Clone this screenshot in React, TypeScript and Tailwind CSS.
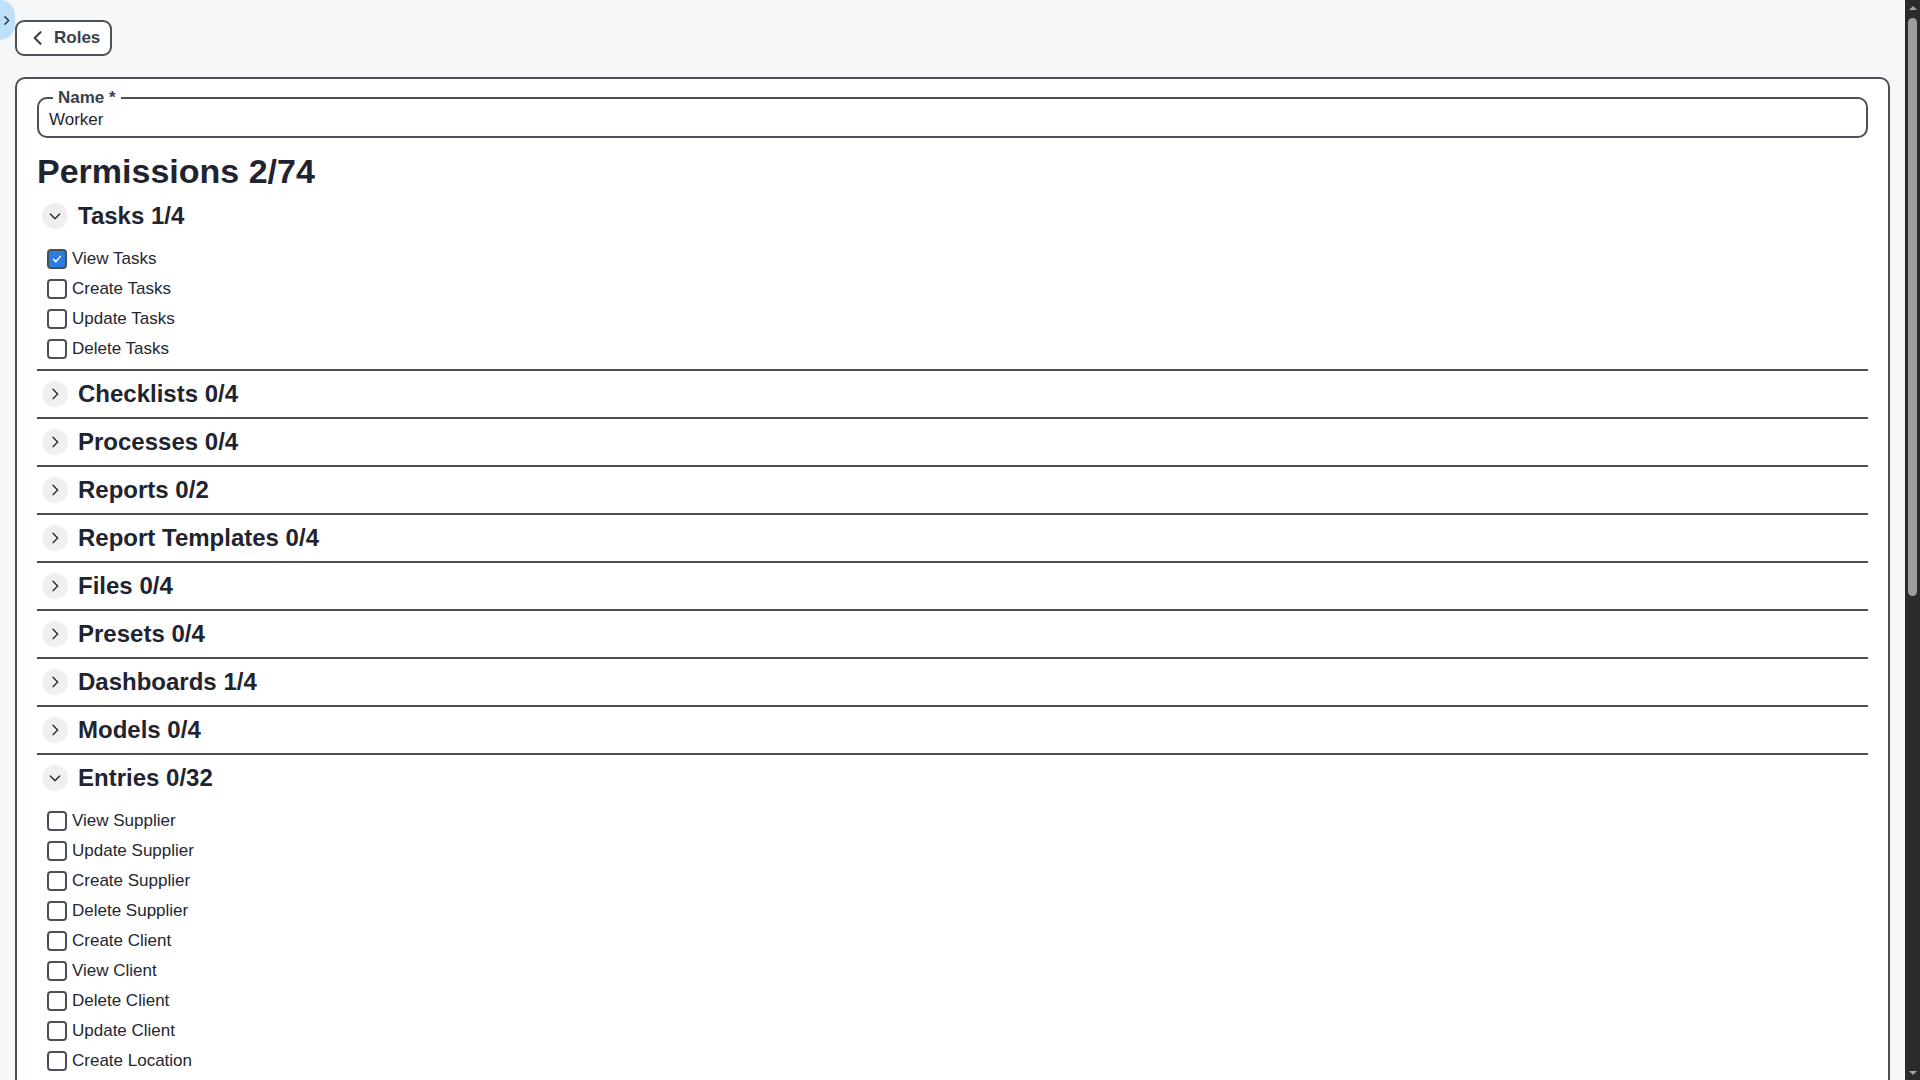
import { useState } from 'react'

type Section = { title: string; granted: number; total: number; open?: boolean; items?: string[]; checked?: string[] }

const sections: Section[] = [
  { title: 'Tasks', granted: 1, total: 4, open: true, items: ['View Tasks', 'Create Tasks', 'Update Tasks', 'Delete Tasks'], checked: ['View Tasks'] },
  { title: 'Checklists', granted: 0, total: 4 },
  { title: 'Processes', granted: 0, total: 4 },
  { title: 'Reports', granted: 0, total: 2 },
  { title: 'Report Templates', granted: 0, total: 4 },
  { title: 'Files', granted: 0, total: 4 },
  { title: 'Presets', granted: 0, total: 4 },
  { title: 'Dashboards', granted: 1, total: 4 },
  { title: 'Models', granted: 0, total: 4 },
  {
    title: 'Entries',
    granted: 0,
    total: 32,
    open: true,
    items: [
      'View Supplier',
      'Update Supplier',
      'Create Supplier',
      'Delete Supplier',
      'Create Client',
      'View Client',
      'Delete Client',
      'Update Client',
      'Create Location',
      'View Location',
      'Update Location',
      'Delete Location',
    ],
    checked: [],
  },
]

function Chevron({ dir, className, width = 2.2 }: { dir: 'left' | 'right' | 'down'; className?: string; width?: number }) {
  const d = dir === 'left' ? 'M15 5l-7 7 7 7' : dir === 'right' ? 'M9 5l7 7-7 7' : 'M5 9l7 7 7-7'
  return (
    <svg viewBox="0 0 24 24" fill="none" stroke="currentColor" strokeWidth={width} strokeLinecap="round" strokeLinejoin="round" className={className}>
      <path d={d} />
    </svg>
  )
}

function Checkbox({ label, initial }: { label: string; initial: boolean }) {
  const [on, setOn] = useState(initial)
  return (
    <label className="flex items-center h-[30px] pl-[10px] gap-[5px] cursor-pointer" onClick={() => setOn(!on)}>
      <span
        className={
          on
            ? 'w-5 h-5 rounded-[4px] border-2 border-[#4b5058] bg-[#2b7de0] flex items-center justify-center'
            : 'w-5 h-5 rounded-[4px] border-2 border-[#4b5058] bg-white'
        }
      >
        {on && (
          <svg viewBox="0 0 16 16" className="w-3 h-3" fill="none" stroke="white" strokeWidth={2} strokeLinecap="round" strokeLinejoin="round">
            <path d="M3.5 8.5l3 3 6-7" />
          </svg>
        )}
      </span>
      <span className="text-[17px] text-[#222731]">{label}</span>
    </label>
  )
}

function PermissionSection({ section }: { section: Section }) {
  const [open, setOpen] = useState(!!section.open)
  return (
    <div className="border-b-2 border-[#4b5058]">
      <button className="flex items-center h-[46px] w-full text-left" onClick={() => setOpen(!open)}>
        <span className="w-[26px] h-[26px] ml-[5px] rounded-full bg-[#efefef] flex items-center justify-center text-[#1f2633]">
          <Chevron dir={open ? 'down' : 'right'} className="w-4 h-4" width={2} />
        </span>
        <span className="ml-[10px] text-[24px] font-bold text-[#1f2430]">
          {section.title} {section.granted}/{section.total}
        </span>
      </button>
      {open && (
        <div className="pt-[5px] pb-[5px]">
          {section.items?.map((it) => (
            <Checkbox key={it} label={it} initial={!!section.checked?.includes(it)} />
          ))}
        </div>
      )}
    </div>
  )
}

function Scrollbar() {
  return (
    <div className="w-[15px] shrink-0 bg-[#2b2b2b] flex flex-col items-center">
      <div className="h-[15px] flex items-center justify-center">
        <div className="w-0 h-0 border-l-[4px] border-r-[4px] border-b-[4px] border-l-transparent border-r-transparent border-b-[#a3a3a3]" />
      </div>
      <div className="w-[9px] h-[578px] mt-[3px] rounded-full bg-[#9f9f9f]" />
      <div className="flex-1" />
      <div className="h-[15px] flex items-center justify-center">
        <div className="w-0 h-0 border-l-[4px] border-r-[4px] border-t-[4px] border-l-transparent border-r-transparent border-t-[#a3a3a3]" />
      </div>
    </div>
  )
}

export default function App() {
  return (
    <div className="h-screen flex bg-[#f6f7f9] font-['Liberation_Sans',Arial,sans-serif] text-[#1f2430]">
      <div className="flex-1 min-w-0 overflow-hidden">
        <div className="relative px-[15px] pt-5 pb-10">
          <div className="absolute left-0 top-0 w-[15px] h-10 rounded-r-full bg-[#bfe0fb] flex items-center text-[#1f2633]">
            <Chevron dir="right" className="w-[13px] h-[13px] shrink-0" width={2.4} />
          </div>
          <button className="flex items-center h-9 pl-[11px] pr-[10px] gap-[6px] border-2 border-[#4b5058] rounded-[9px] bg-white text-[17px] font-bold text-[#3a414d]">
            <Chevron dir="left" className="w-5 h-5" width={2.5} />
            Roles
          </button>

          <div className="mt-[21px] bg-white border-2 border-[#4b5058] rounded-[10px] p-5">
            <fieldset className="border-2 border-[#4b5058] rounded-[10px] px-[10px] pb-[4px] -mt-[11px]">
              <legend className="px-[5px] ml-[4px] text-[17px] font-bold leading-[20px] text-[#3a414d]">Name *</legend>
              <input
                className="w-full outline-none text-[17px] leading-[20px] text-[#1f2430] bg-transparent"
                defaultValue="Worker"
              />
            </fieldset>

            <h2 className="mt-[13px] text-[34px] font-bold leading-[40px] text-[#1f2430]">Permissions 2/74</h2>

            <div className="mt-[2px]">
              {sections.map((s) => (
                <PermissionSection key={s.title} section={s} />
              ))}
            </div>
          </div>
        </div>
      </div>
      <Scrollbar />
    </div>
  )
}
